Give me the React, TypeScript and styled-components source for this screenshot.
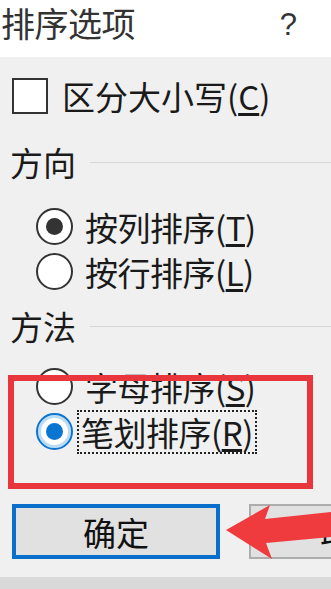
import * as React from 'react'
import styled, { createGlobalStyle } from 'styled-components'

const Global = createGlobalStyle`
  html, body {
    margin: 0;
    padding: 0;
    background: #f0f0f0;
  }
  * {
    box-sizing: border-box;
  }
`

const Dialog = styled.div`
  position: relative;
  width: 331px;
  height: 589px;
  overflow: hidden;
  background: #f0f0f0;
  font-family: 'Noto Sans CJK SC', 'Noto Sans', sans-serif;
  color: #1a1a1a;
`

const TitleBar = styled.div`
  height: 57px;
  background: #ffffff;
  display: flex;
  align-items: flex-start;
  justify-content: space-between;
  padding: 2px 34px 0 1px;
`

const Title = styled.span`
  font-size: 34px;
  line-height: 42px;
  color: #333;
  letter-spacing: -0.5px;
`

const Help = styled.span`
  font-family: 'Liberation Sans', sans-serif;
  font-size: 31px;
  line-height: 42px;
  color: #333;
  padding-top: 2px;
`

const Body = styled.div`
  display: flex;
  flex-direction: column;
  padding: 0 12px;
`

const CheckRow = styled.label`
  display: flex;
  align-items: center;
  gap: 14px;
  height: 36px;
  margin-top: 21px;
  font-size: 33px;
  line-height: 36px;
`

const Box = styled.span`
  width: 36px;
  height: 36px;
  border: 2px solid #333;
  background: #fff;
  flex: none;
`

const GroupHead = styled.div<{ $top: number }>`
  display: flex;
  align-items: center;
  gap: 14px;
  height: 36px;
  margin-top: ${(p) => p.$top}px;
  margin-left: -2px;
  font-size: 33px;
  line-height: 36px;
  &::after {
    content: '';
    flex: 1;
    height: 1px;
    margin-right: -12px;
    background: #d6d6d6;
  }
`

const RadioRow = styled.label<{ $top?: number }>`
  display: flex;
  align-items: center;
  gap: 10px;
  height: 45px;
  margin-top: ${(p) => p.$top ?? 0}px;
  padding-left: 24px;
  font-size: 33px;
  line-height: 40px;
`

const Circle = styled.span<{ $checked?: boolean; $focus?: boolean }>`
  position: relative;
  width: 37px;
  height: 37px;
  flex: none;
  border-radius: 50%;
  background: #fff;
  border: 2px solid ${(p) => (p.$focus ? '#0a74d1' : '#333')};
  box-shadow: ${(p) => (p.$focus ? 'inset 0 0 0 3px #bcdcf6' : 'none')};
  &::after {
    content: '';
    display: ${(p) => (p.$checked ? 'block' : 'none')};
    position: absolute;
    left: 50%;
    top: 50%;
    width: 17px;
    height: 17px;
    margin: -8.5px 0 0 -8.5px;
    border-radius: 50%;
    background: ${(p) => (p.$focus ? '#0a74d1' : '#333')};
  }
`

const Label = styled.span<{ $focus?: boolean }>`
  padding: 0 2px;
  margin-left: ${(p) => (p.$focus ? '-4px' : '0')};
  outline: ${(p) => (p.$focus ? '2px dotted #222' : 'none')};
  outline-offset: 0;
  white-space: nowrap;
  letter-spacing: -0.5px;
`

const Buttons = styled.div`
  display: flex;
  gap: 29px;
  margin-top: 50px;
`

const Button = styled.button<{ $primary?: boolean }>`
  flex: none;
  width: 208px;
  height: 55px;
  font-family: inherit;
  font-size: 33px;
  color: #111;
  background: #e1e1e1;
  border: ${(p) => (p.$primary ? '4px solid #0a6fcb' : '2px solid #adadad')};
  padding: 0;
  text-align: center;
  white-space: nowrap;
`

const Footer = styled.div`
  position: absolute;
  left: 0;
  right: 0;
  bottom: 0;
  height: 12px;
  background: #d9d9d9;
`

const Highlight = styled.div`
  position: absolute;
  left: 8px;
  top: 375px;
  width: 305px;
  height: 114px;
  border: 6px solid #e8363c;
  pointer-events: none;
`

const Arrow = styled.svg`
  position: absolute;
  left: 220px;
  top: 495px;
  width: 111px;
  height: 70px;
  pointer-events: none;
`

const U = styled.u`
  text-underline-offset: 3px;
`

export default function App() {
  return (
    <>
      <Global />
      <Dialog>
        <TitleBar>
          <Title>排序选项</Title>
          <Help>?</Help>
        </TitleBar>
        <Body>
          <CheckRow>
            <Box />
            <span>
              区分大小写(<U>C</U>)
            </span>
          </CheckRow>

          <GroupHead $top={30}>方向</GroupHead>
          <RadioRow $top={24}>
            <Circle $checked />
            <Label>
              按列排序(<U>T</U>)
            </Label>
          </RadioRow>
          <RadioRow>
            <Circle />
            <Label>
              按行排序(<U>L</U>)
            </Label>
          </RadioRow>

          <GroupHead $top={14}>方法</GroupHead>
          <RadioRow $top={20}>
            <Circle />
            <Label>
              字母排序(<U>S</U>)
            </Label>
          </RadioRow>
          <RadioRow>
            <Circle $checked $focus />
            <Label $focus>
              笔划排序(<U>R</U>)
            </Label>
          </RadioRow>

          <Buttons>
            <Button $primary>确定</Button>
            <Button>取消</Button>
          </Buttons>
        </Body>
        <Footer />
        <Highlight />
        <Arrow viewBox="0 0 111 70">
          <path
            d="M6 35 L50 10 L45 24 L111 17 L111 42 L46 48 L52 64 Z"
            fill="#ef3a3e"
          />
        </Arrow>
      </Dialog>
    </>
  )
}
